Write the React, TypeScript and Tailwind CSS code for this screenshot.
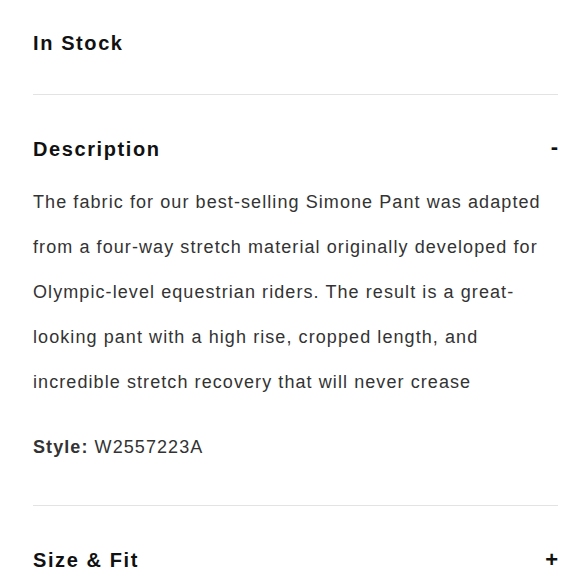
export default function App() {
  const font = { fontFamily: '"Liberation Sans", Arial, sans-serif' };
  return (
    <div className="w-[580px] h-[580px] overflow-hidden bg-white" style={font}>
      <div className="pl-[33px] pr-[22px]">
        <div className="pt-[29px] pb-[37px]">
          <h2 className="text-[20px] leading-[28px] font-bold tracking-[0.08em] text-[#111]">In Stock</h2>
        </div>
        <div className="h-px bg-[#e3e3e3]" />
        <div className="flex items-center justify-between pt-[40px]">
          <h3 className="text-[20px] leading-[28px] font-bold tracking-[0.08em] text-[#111]">Description</h3>
          <span className="text-[22px] font-bold leading-[28px] text-[#111] -mt-[5px]">-</span>
        </div>
        <p className="mt-[17px] text-[18px] leading-[45px] tracking-[0.06em] text-[#333]">
          The fabric for our best-selling Simone Pant was adapted from a four-way stretch material originally developed for Olympic-level equestrian riders. The result is a great-looking pant with a high rise, cropped length, and incredible stretch recovery that will never crease
        </p>
        <p className="mt-[20px] text-[18px] leading-[45px] tracking-[0.06em] text-[#333]">
          <span className="font-bold">Style:</span> W2557223A
        </p>
        <div className="mt-[35px] h-px bg-[#e3e3e3]" />
        <div className="flex items-center justify-between pt-[40px]">
          <h3 className="text-[20px] leading-[28px] font-bold tracking-[0.08em] text-[#111]">Size &amp; Fit</h3>
          <span className="text-[22px] font-bold leading-[28px] text-[#111]">+</span>
        </div>
      </div>
    </div>
  );
}
